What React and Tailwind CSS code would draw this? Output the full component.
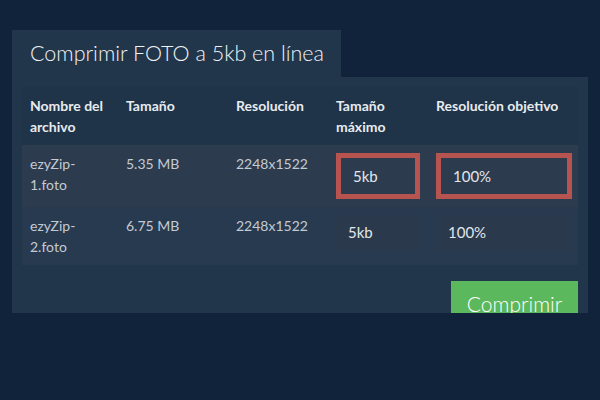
import React from "react";

const rows = [
  { name: ["ezyZip-", "1.foto"], size: "5.35 MB", res: "2248x1522", marked: true },
  { name: ["ezyZip-", "2.foto"], size: "6.75 MB", res: "2248x1522", marked: false },
];

const Field = ({ value, marked }) => {
  if (marked) {
    return (
      <div className="border-[5px] border-[#b85450]">
        <div className="h-9 flex items-center px-3 bg-[#2c3b4e] text-[15px] text-[#e2e6ea]">
          {value}
        </div>
      </div>
    );
  }
  return (
    <div className="h-[35px] flex items-center px-3 bg-[#2a394c] text-[15px] text-[#e2e6ea]">
      {value}
    </div>
  );
};

export default function App() {
  return (
    <div
      className="w-[600px] h-[400px] bg-[#10233a] pt-[30px] px-3 overflow-hidden"
      style={{ fontFamily: "Lato, 'Open Sans', sans-serif" }}
    >
      <div className="w-[329px] h-[47px] bg-[#22364b] flex items-center pl-[18px]">
        <span className="text-[21.5px] font-light text-[#f0f3f5]">
          Comprimir FOTO a 5kb en línea
        </span>
      </div>
      <div className="w-[576px] h-[236px] bg-[#22364b] p-[10px] overflow-hidden">
        <table className="w-[556px] table-fixed border-collapse text-[14px] leading-[21px]">
          <colgroup>
            <col className="w-[96px]" />
            <col className="w-[110px]" />
            <col className="w-[100px]" />
            <col className="w-[100px]" />
            <col className="w-[150px]" />
          </colgroup>
          <thead>
            <tr className="bg-[#1f3349] text-left text-[#e8ebee]">
              <th className="px-2 py-2 align-top font-bold">Nombre del archivo</th>
              <th className="px-2 py-2 align-top font-bold">Tamaño</th>
              <th className="px-2 py-2 align-top font-bold">Resolución</th>
              <th className="px-2 py-2 align-top font-bold">Tamaño máximo</th>
              <th className="px-2 py-2 align-top font-bold">Resolución objetivo</th>
            </tr>
          </thead>
          <tbody className="text-[#c3cad2]">
            {rows.map((r, i) => (
              <tr key={i} className={i === 0 ? "bg-[#2c3b4e]" : "bg-[#283a50]"}>
                <td className="px-2 py-2 align-top">
                  {r.name[0]}
                  <br />
                  {r.name[1]}
                </td>
                <td className="px-2 py-2 align-top">{r.size}</td>
                <td className="px-2 py-2 align-top">{r.res}</td>
                <td className="px-2 py-2 align-top">
                  <Field value="5kb" marked={r.marked} />
                </td>
                <td className="pl-2 pr-[6px] py-2 align-top">
                  <Field value="100%" marked={r.marked} />
                </td>
              </tr>
            ))}
          </tbody>
        </table>
        <div className="flex justify-end mt-4">
          <button className="w-[127px] h-[50px] bg-[#5cb85c] text-white text-[21px] font-light flex items-start justify-center pt-[7px]">
            Comprimir
          </button>
        </div>
      </div>
    </div>
  );
}
